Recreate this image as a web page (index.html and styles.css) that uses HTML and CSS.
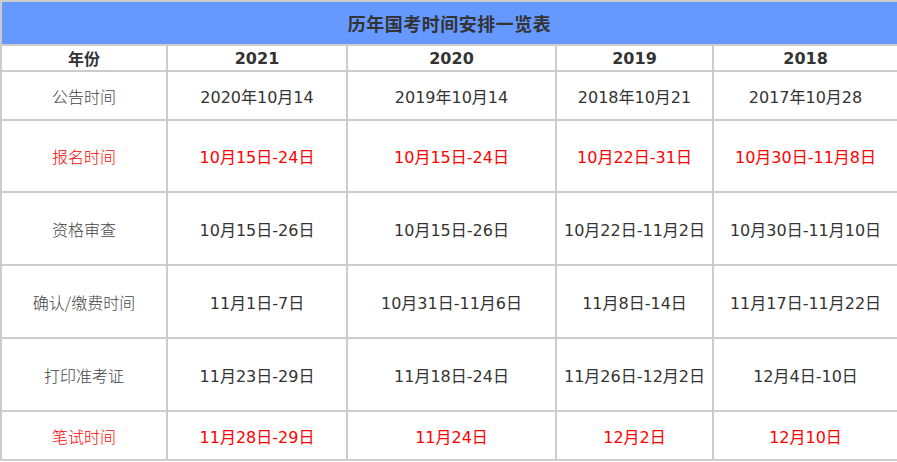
FILE: index.html
```html
<!DOCTYPE html>
<html lang="zh-CN">
<head>
<meta charset="utf-8">
<title>历年国考时间安排一览表</title>
<link rel="stylesheet" href="styles.css">
</head>
<body>
<table class="schedule">
  <colgroup>
    <col class="c1"><col class="c2"><col class="c3"><col class="c4"><col class="c5">
  </colgroup>
  <tr class="r-title"><td colspan="5" class="title">历年国考时间安排一览表</td></tr>
  <tr class="r-head"><th>年份</th><th>2021</th><th>2020</th><th>2019</th><th>2018</th></tr>
  <tr class="r-short"><td class="label">公告时间</td><td>2020年10月14</td><td>2019年10月14</td><td>2018年10月21</td><td>2017年10月28</td></tr>
  <tr class="r-tall red"><td class="label">报名时间</td><td>10月15日-24日</td><td>10月15日-24日</td><td>10月22日-31日</td><td>10月30日-11月8日</td></tr>
  <tr class="r-tall2"><td class="label">资格审查</td><td>10月15日-26日</td><td>10月15日-26日</td><td>10月22日-11月2日</td><td>10月30日-11月10日</td></tr>
  <tr class="r-tall2"><td class="label">确认/缴费时间</td><td>11月1日-7日</td><td>10月31日-11月6日</td><td>11月8日-14日</td><td>11月17日-11月22日</td></tr>
  <tr class="r-tall2"><td class="label">打印准考证</td><td>11月23日-29日</td><td>11月18日-24日</td><td>11月26日-12月2日</td><td>12月4日-10日</td></tr>
  <tr class="r-last red"><td class="label">笔试时间</td><td>11月28日-29日</td><td>11月24日</td><td>12月2日</td><td>12月10日</td></tr>
</table>
</body>
</html>
```
FILE: styles.css
```css
html, body {
  margin: 0;
  padding: 0;
  background: #ffffff;
}
.schedule {
  border-collapse: collapse;
  table-layout: fixed;
  width: 897px;
  font-family: "DejaVu Sans", "Noto Sans CJK SC", sans-serif;
  font-size: 16px;
  color: #333333;
}
.c1 { width: 166px; }
.c2 { width: 180px; }
.c3 { width: 209px; }
.c4 { width: 157px; }
.c5 { width: 185px; }
.schedule td, .schedule th {
  border: 2px solid #cccccc;
  padding: 0;
  text-align: center;
  vertical-align: middle;
  white-space: nowrap;
}
.title {
  background: #6699ff;
  font-family: "Noto Sans CJK SC", sans-serif;
  font-weight: bold;
  font-size: 18px;
  color: #333333;
  letter-spacing: 0.5px;
}
.r-title td { height: 42px; }
.r-head th { height: 23px; font-weight: bold; font-size: 16px; }
.r-short td { height: 47px; }
.r-tall td { height: 70px; }
.r-tall2 td { height: 71px; }
.r-last td { height: 47px; }
.label {
  font-family: "Noto Sans CJK SC", sans-serif;
  font-weight: 300;
  color: #444444;
}
.red td { color: #ff0000; }
.red td.label { color: #ff0000; }
```
